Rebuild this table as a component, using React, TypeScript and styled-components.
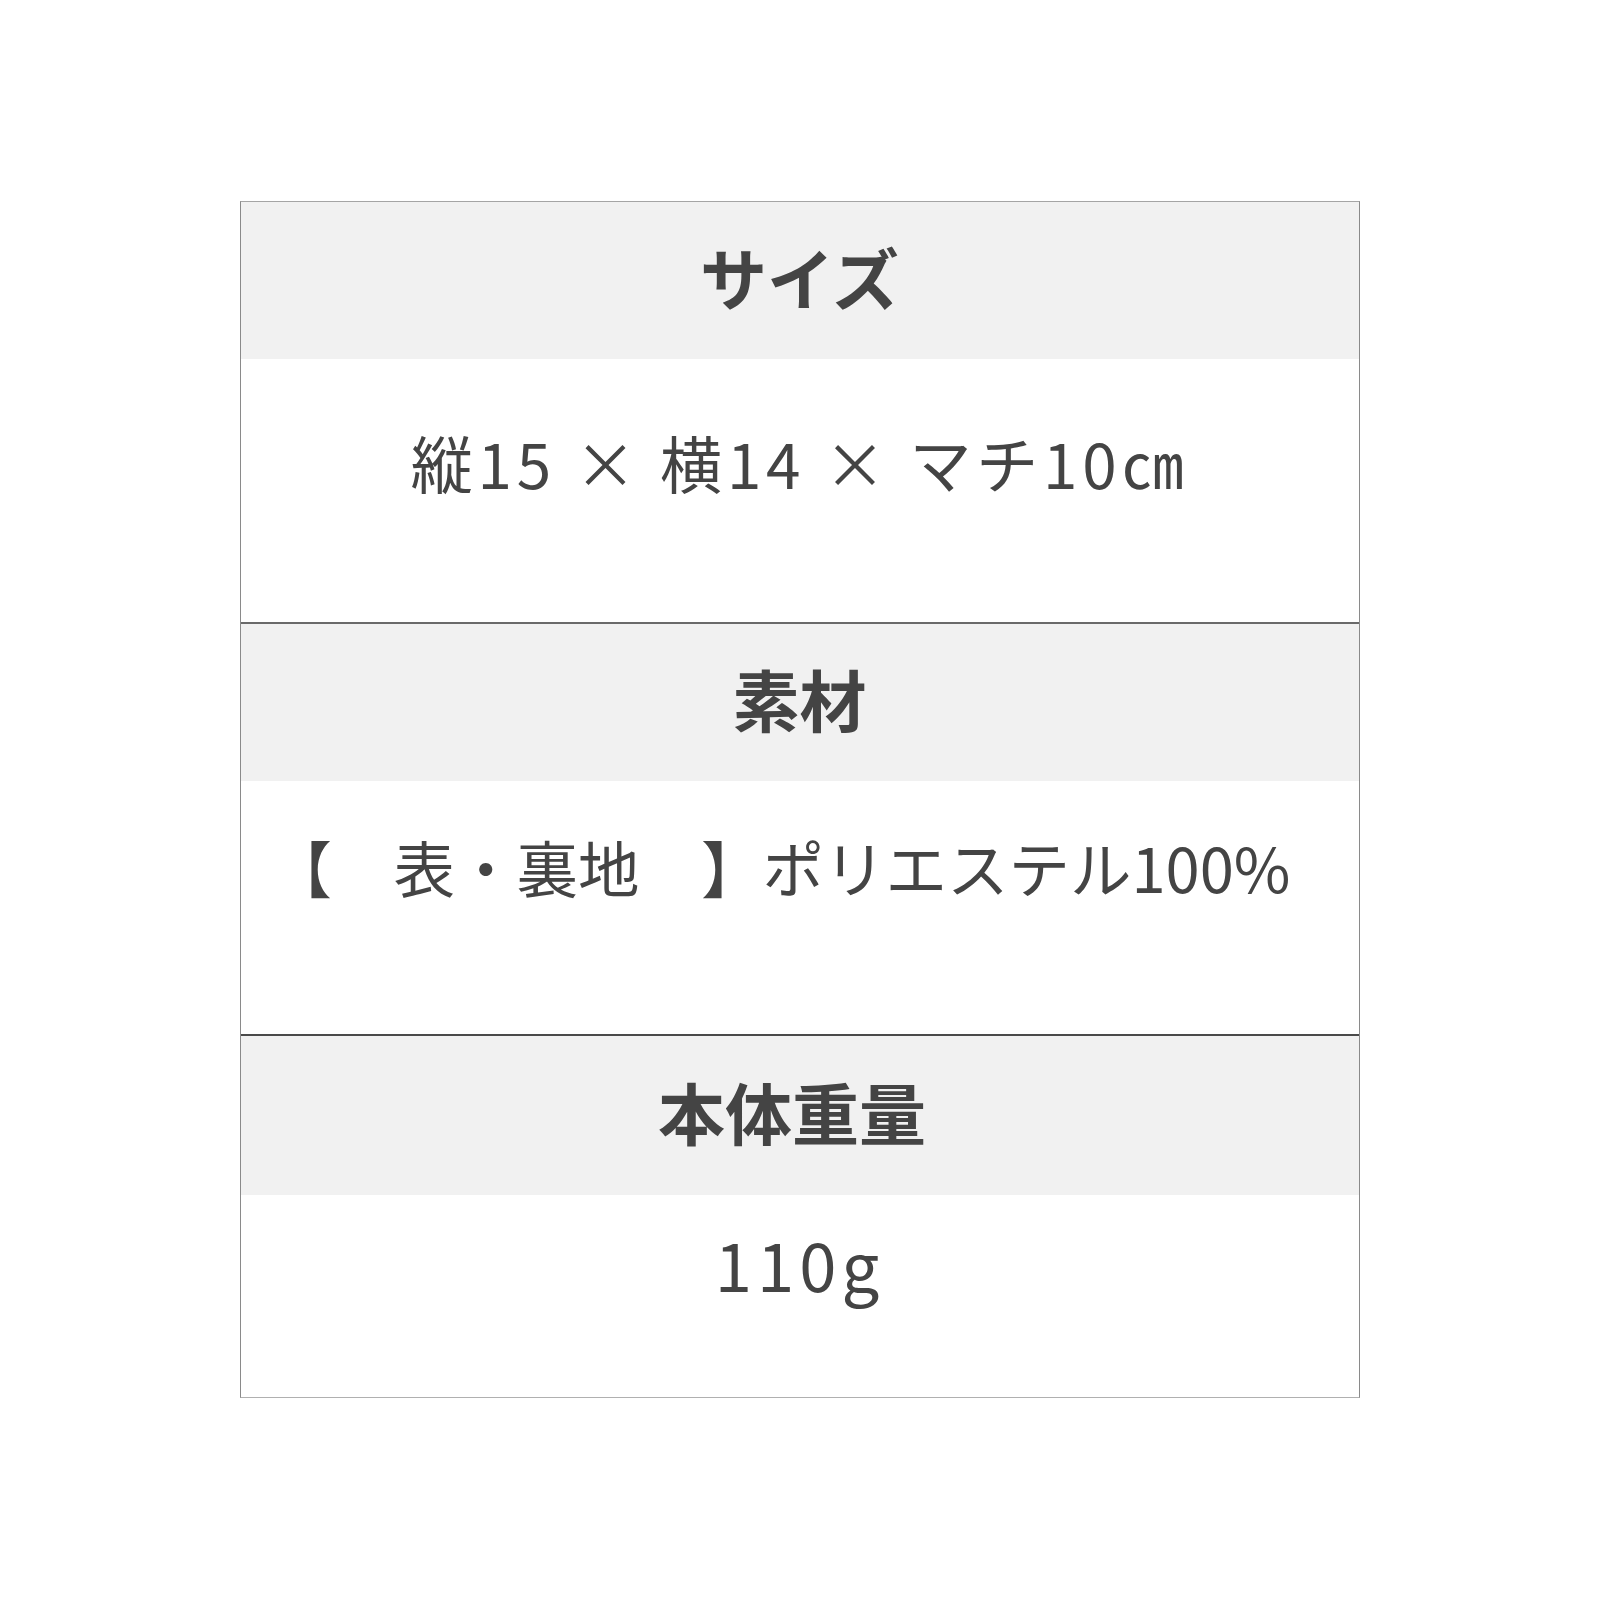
import React from 'react'
import styled, { createGlobalStyle } from 'styled-components'

const GlobalStyle = createGlobalStyle`
  html, body {
    margin: 0;
    padding: 0;
    background: #ffffff;
  }
  body {
    font-family: "Noto Sans CJK JP", "Noto Sans", sans-serif;
    color: #444444;
  }
`

const Page = styled.div`
  width: 1600px;
  height: 1600px;
  padding-top: 201px;
  box-sizing: border-box;
  display: flex;
  justify-content: center;
  background: #ffffff;
`

const Table = styled.div`
  width: 1120px;
  height: 1197px;
  box-sizing: border-box;
  margin-left: -1px;
  border: 1px solid #8a8a8a;
  border-top-color: #a5a5a5;
  border-bottom-color: #b0b0b0;
  display: flex;
  flex-direction: column;
`

const Section = styled.section<{ $divider?: string }>`
  display: flex;
  flex-direction: column;
  border-top: ${(p) => (p.$divider ? `2px solid ${p.$divider}` : 'none')};
`

const Heading = styled.h2<{ $height: number; $shift: number }>`
  margin: 0;
  height: ${(p) => p.$height}px;
  box-sizing: border-box;
  padding-bottom: 10px;
  padding-right: ${(p) => p.$shift}px;
  background: #f1f1f1;
  display: flex;
  align-items: center;
  justify-content: center;
  font-size: 67px;
  font-weight: 700;
  line-height: 1;
  color: #444444;
`

const Value = styled.div<{ $height: number; $top: number; $size: number; $spacing: number; $shift: number }>`
  height: ${(p) => p.$height}px;
  box-sizing: border-box;
  padding-top: ${(p) => p.$top}px;
  padding-right: ${(p) => p.$shift}px;
  display: flex;
  justify-content: center;
  font-size: ${(p) => p.$size}px;
  letter-spacing: ${(p) => p.$spacing}px;
  font-weight: 400;
  line-height: 1;
  color: #444444;
  white-space: pre;
`

const rows = [
  { title: 'サイズ', titleShift: 0, value: '縦15 × 横14 × マチ10㎝', head: 157, body: 263, top: 72, size: 62, spacing: 4.8, shift: 0 },
  { title: '素材', titleShift: 0, value: '【　表・裏地　】ポリエステル100%', head: 157, body: 253, top: 55, size: 61.5, spacing: 0, shift: 38, divider: '#6a6a6a' },
  { title: '本体重量', titleShift: 15, value: '110g', head: 159, body: 203, top: 34, size: 67, spacing: 5, shift: 0, divider: '#4a4a4a' },
]

const App = () => {
  return (
    <>
      <GlobalStyle />
      <Page>
        <Table>
          {rows.map((r, i) => (
            <Section key={i} $divider={r.divider}>
              <Heading $height={r.head} $shift={r.titleShift}>{r.title}</Heading>
              <Value $height={r.body} $top={r.top} $size={r.size} $spacing={r.spacing} $shift={r.shift}>
                {r.value}
              </Value>
            </Section>
          ))}
        </Table>
      </Page>
    </>
  )
}

export default App
